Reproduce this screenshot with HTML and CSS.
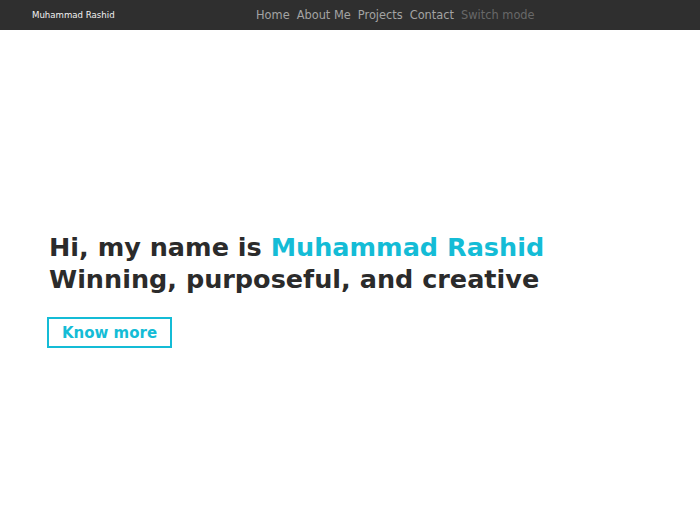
FILE: index.html
```html
<!DOCTYPE html>
<html lang="en">
<head>
<meta charset="utf-8">
<title>Muhammad Rashid</title>
<link rel="stylesheet" href="styles.css">
</head>
<body>
<header class="navbar">
  <a class="brand" href="#">Muhammad Rashid</a>
  <nav class="nav">
    <a class="nav-link" href="#">Home</a>
    <a class="nav-link" href="#">About Me</a>
    <a class="nav-link" href="#">Projects</a>
    <a class="nav-link" href="#">Contact</a>
    <a class="nav-link muted" href="#">Switch mode</a>
  </nav>
</header>
<main class="hero">
  <h1 class="title">Hi, my name is <span class="accent">Muhammad Rashid</span><br>Winning, purposeful, and creative</h1>
  <a class="btn" href="#">Know more</a>
</main>
</body>
</html>
```
FILE: styles.css
```css
* { box-sizing: border-box; }
html, body { margin: 0; padding: 0; background: #fff; }
body { font-family: "DejaVu Sans", "Noto Sans", sans-serif; color: #2b2b2b; }
a { text-decoration: none; }
.navbar {
  height: 30px;
  background: #2f2f2f;
  display: flex;
  align-items: center;
  padding-left: 32px;
}
.brand { color: #f2f2f2; font-size: 8.6px; width: 224px; }
.nav { display: flex; gap: 7px; }
.nav-link { color: #a3a3a3; font-size: 11.4px; }
.nav-link.muted { color: #686868; }
.hero {
  height: 495px;
  display: flex;
  flex-direction: column;
  justify-content: center;
  align-items: flex-start;
  padding-left: 49px;
  padding-top: 24px;
}
.title {
  margin: 0;
  font-size: 25.5px;
  line-height: 32px;
  font-weight: 700;
  color: #2b2b2b;
}
.accent { color: #14bcd6; }
.btn {
  margin-top: 22px;
  margin-left: -2px;
  border: 2px solid #14bcd6;
  color: #14bcd6;
  font-weight: 700;
  font-size: 15px;
  white-space: nowrap;
  height: 31px;
  width: 125px;
  display: flex;
  align-items: center;
  justify-content: center;
}
```
